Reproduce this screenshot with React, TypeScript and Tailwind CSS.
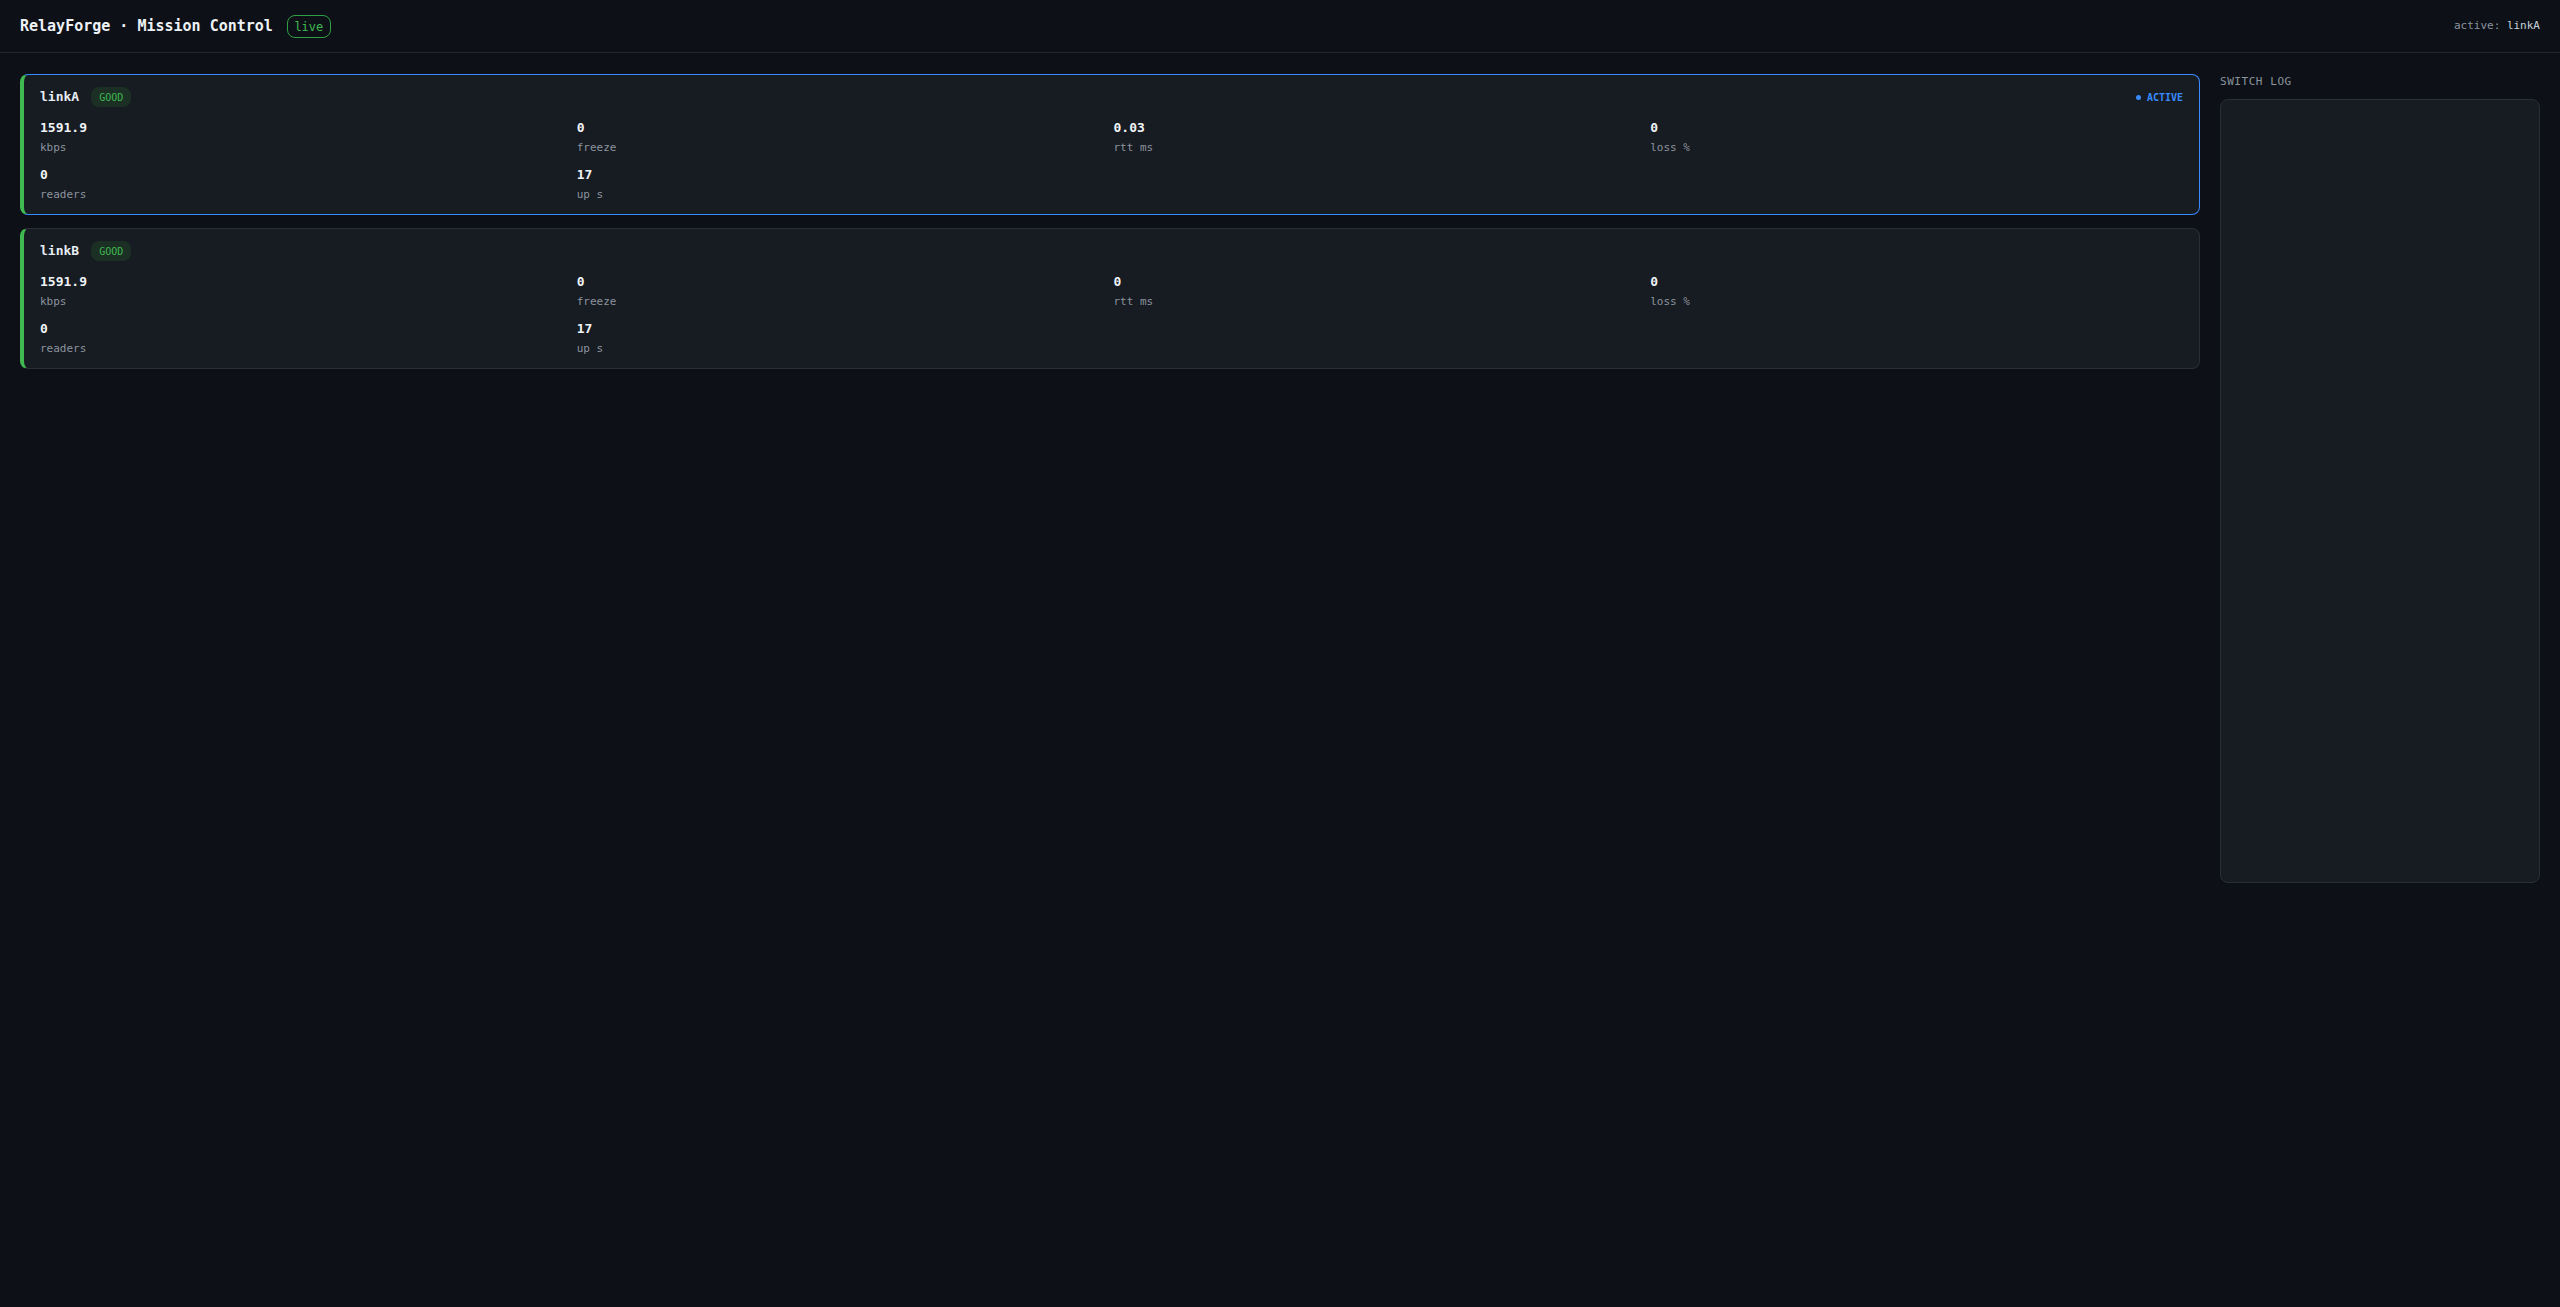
import React from 'react';

interface Link {
    id: string;
    health: string;
    active: boolean;
    metrics: { value: string; label: string }[];
}

const links: Link[] = [
    {
        id: 'linkA',
        health: 'GOOD',
        active: true,
        metrics: [
            { value: '1591.9', label: 'kbps' },
            { value: '0', label: 'freeze' },
            { value: '0.03', label: 'rtt ms' },
            { value: '0', label: 'loss %' },
            { value: '0', label: 'readers' },
            { value: '17', label: 'up s' },
        ],
    },
    {
        id: 'linkB',
        health: 'GOOD',
        active: false,
        metrics: [
            { value: '1591.9', label: 'kbps' },
            { value: '0', label: 'freeze' },
            { value: '0', label: 'rtt ms' },
            { value: '0', label: 'loss %' },
            { value: '0', label: 'readers' },
            { value: '17', label: 'up s' },
        ],
    },
];

function LinkCard({ link }: { link: Link }) {
    return (
        <div
            className={
                link.active
                    ? 'rounded-lg border border-[#388bfd] border-l-4 border-l-[#3fb950] bg-[#171b22] pt-3 pb-[11px] pr-4 pl-4'
                    : 'rounded-lg border border-[#2a2f37] border-l-4 border-l-[#3fb950] bg-[#171b22] pt-3 pb-[11px] pr-4 pl-4'
            }
        >
            <div className="mb-[11px] flex h-5 items-center gap-3">
                <span className="text-[13px] font-bold text-[#e6edf3]">{link.id}</span>
                <span className="flex h-5 items-center rounded-lg bg-[#1b2f24] px-2 text-[10px] text-[#3fb950]">
                    {link.health}
                </span>
                {link.active && (
                    <span className="ml-auto flex items-center gap-1.5 text-[10px] font-bold text-[#388bfd]">
                        <span className="h-[5px] w-[5px] rounded-full bg-[#388bfd]" />
                        ACTIVE
                    </span>
                )}
            </div>
            <div className="grid grid-cols-4 gap-x-1 gap-y-[9px]">
                {link.metrics.map((m) => (
                    <div key={m.label}>
                        <div className="text-[13px] font-bold text-[#f0f3f6]">{m.value}</div>
                        <div className="mt-0.5 text-[11px] text-[#8b949e]">{m.label}</div>
                    </div>
                ))}
            </div>
        </div>
    );
}

export default function App() {
    return (
        <div
            className="min-h-screen bg-[#0d1117] text-[#e6edf3]"
            style={{ fontFamily: '"DejaVu Sans Mono", "Liberation Mono", monospace' }}
        >
            <header className="flex items-center border-b border-[#21262d] px-5 pt-[15px] pb-[14px]">
                <div className="flex items-center gap-3.5">
                    <h1 className="text-[15px] font-bold text-[#eef2f6]">RelayForge · Mission Control</h1>
                    <span className="flex h-[23px] items-center rounded-lg border border-[#2ea043] px-[6.5px] text-[12px] text-[#3fb950]">
                        live
                    </span>
                </div>
                <div className="ml-auto text-[11px] text-[#8b949e]">
                    active: <span className="text-[#c9d1d9]">linkA</span>
                </div>
            </header>

            <main className="flex gap-5 px-5 pt-[21px]">
                <div className="flex flex-1 flex-col gap-[13px]">
                    {links.map((link) => (
                        <LinkCard key={link.id} link={link} />
                    ))}
                </div>
                <aside className="w-80">
                    <div className="mb-2 text-[11px] uppercase tracking-wider text-[#8b949e]">Switch log</div>
                    <div className="h-[60vh] rounded-lg border border-[#2a2f37] bg-[#171b22]" />
                </aside>
            </main>
        </div>
    );
}
